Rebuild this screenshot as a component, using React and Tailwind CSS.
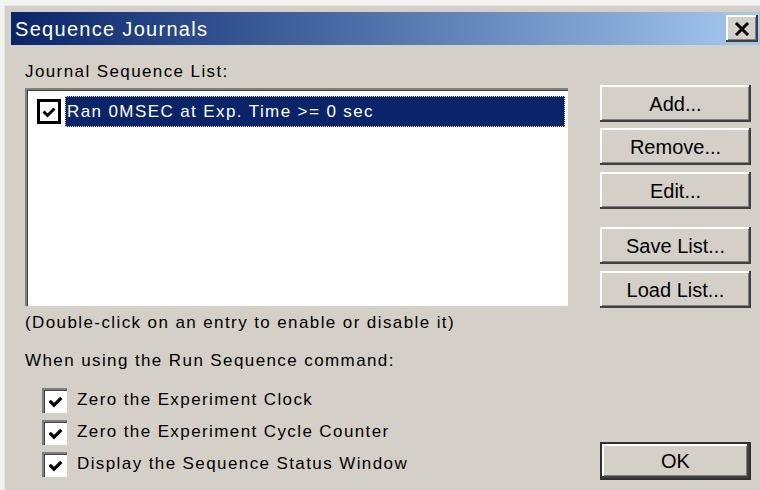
import React from "react";

const raised =
  "bg-[#d4d0c8] shadow-[inset_-2px_-2px_0_#404040,inset_2px_2px_0_#ffffff,inset_-3px_-3px_0_#808080]";

function Check({ size = 16 }) {
  return (
    <svg width={size} height={size} viewBox="0 0 16 16">
      <path d="M2.5 7.5 L6.5 11.5 L13.5 4.5" fill="none" stroke="#000" strokeWidth="3" />
    </svg>
  );
}

function Button({ children, className = "" }) {
  return (
    <div
      className={`w-[151px] h-[37px] flex items-center justify-center text-[20px] text-black ${raised} ${className}`}
    >
      {children}
    </div>
  );
}

function Option({ label }) {
  return (
    <div className="h-[32px] flex items-center">
      <div className="ml-[17px] w-[25px] h-[25px] bg-white flex items-center justify-center pt-[3px] pl-[2px] shadow-[inset_2px_2px_0_#808080,inset_3px_3px_0_#404040,inset_-2px_-2px_0_#ffffff]">
        <Check size={17} />
      </div>
      <span className="ml-[10px]">{label}</span>
    </div>
  );
}

export default function App() {
  return (
    <div className="w-[760px] h-[490px] overflow-hidden bg-[#f2f2f0] pl-[4px] pt-[5px] font-['Liberation_Sans',Arial,sans-serif]">
      <div className="h-full bg-[#d4d0c8] border-l border-t border-[#e8e6e0] pl-[6px] pt-[6px]">
        {/* title bar */}
        <div className="h-[33px] flex items-center justify-between bg-gradient-to-r from-[#0a246a] to-[#a6caf0] pl-[4px] pr-[2px]">
          <span className="text-white text-[20px] tracking-[1.3px]">Sequence Journals</span>
          <div className={`w-[32px] h-[27px] flex items-center justify-center ${raised}`}>
            <svg width="16" height="14" viewBox="0 0 16 14">
              <path d="M2 1 L14 13 M14 1 L2 13" stroke="#000" strokeWidth="3" />
            </svg>
          </div>
        </div>

        <div className="flex text-[17px] text-black leading-[20px] tracking-[1.4px]">
          {/* list and options */}
          <div className="ml-[14px] w-[543px]">
            <div className="mt-[17px] h-[20px]">Journal Sequence List:</div>
            <div className="mt-[6px] h-[218px] bg-white pl-[12px] pt-[8px] shadow-[inset_2px_2px_0_#808080,inset_3px_3px_0_#404040,inset_-2px_-2px_0_#ffffff]">
              <div className="flex items-center h-[31px]">
                <div className="w-[24px] h-[25px] border-[3px] border-black bg-white flex items-center justify-center">
                  <Check size={16} />
                </div>
                <div className="ml-[4px] flex-1 mr-[3px] h-full flex items-center bg-[#0a246a] text-white border border-dotted border-[#e8dca0] pl-[1px]">
                  Ran 0MSEC at Exp. Time &gt;= 0 sec
                </div>
              </div>
            </div>
            <div className="mt-[7px] h-[20px] whitespace-nowrap">(Double-click on an entry to enable or disable it)</div>
            <div className="mt-[18px] h-[20px]">When using the Run Sequence command:</div>
            <div className="mt-[13px]">
              <Option label="Zero the Experiment Clock" />
              <Option label="Zero the Experiment Cycle Counter" />
              <Option label="Display the Sequence Status Window" />
            </div>
          </div>

          {/* buttons */}
          <div className="ml-[32px] flex flex-col tracking-normal">
            <Button className="mt-[40px]">Add...</Button>
            <Button className="mt-[6px]">Remove...</Button>
            <Button className="mt-[7px]">Edit...</Button>
            <Button className="mt-[18px]">Save List...</Button>
            <Button className="mt-[7px]">Load List...</Button>
            <div className="mt-[134px] w-[151px] h-[38px] border-2 border-[#303030]">
              <div className={`w-full h-full flex items-center justify-center text-[20px] ${raised}`}>OK</div>
            </div>
          </div>
        </div>
      </div>
    </div>
  );
}
